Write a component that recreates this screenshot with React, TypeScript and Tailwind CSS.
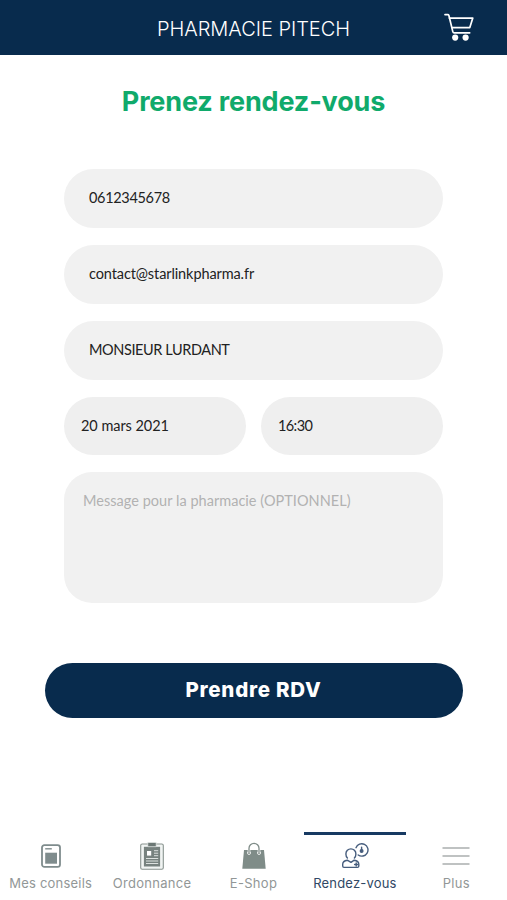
import type { ReactNode } from "react";

const fields = [
  { id: "phone", value: "0612345678", spacing: "tracking-[-0.33px]" },
  { id: "email", value: "contact@starlinkpharma.fr", spacing: "tracking-[-0.1px]" },
  { id: "name", value: "MONSIEUR LURDANT", spacing: "tracking-[-0.4px]" },
];

function CartIcon() {
  return (
    <svg viewBox="0 0 30 28" className="h-7 w-[30px]" fill="none" stroke="currentColor" strokeWidth="1.7" strokeLinecap="round" strokeLinejoin="round">
      <path d="M1 1.6h2.7c.6 0 1 .3 1.2.9l3.9 16.1c.2.8.6 1.2 1.3 1.2h15.6" />
      <path d="M5.4 5.1h23.4l-3 9.5H8" />
      <circle cx="11.2" cy="24.6" r="3.1" fill="currentColor" stroke="none" />
      <circle cx="21.6" cy="24.6" r="3.1" fill="currentColor" stroke="none" />
    </svg>
  );
}

function AdviceIcon() {
  return (
    <svg viewBox="0 0 20 24" className="h-6 w-5" fill="none">
      <rect x="1" y="1.2" width="18" height="21.6" rx="2.4" stroke="#7f8c8d" strokeWidth="1.8" />
      <path d="M4.2 4.8h6.6" stroke="#7f8c8d" strokeWidth="1.4" />
      <path d="M4.2 8.7h11.8v11H4.2z" fill="#7f8c8d" />
    </svg>
  );
}

function PrescriptionIcon() {
  return (
    <svg viewBox="0 0 24 28" className="h-7 w-6" fill="none">
      <rect x=".7" y="2" width="22.6" height="25.3" rx="1.5" fill="#f1f4f3" stroke="#89938f" strokeWidth="1.1" />
      <path d="M3.9 4.8h16.2v19.7H3.9z" fill="#77827f" />
      <path d="M7.8.5h8.4v4.2H7.8z" fill="#6c7875" stroke="#eef1f0" strokeWidth=".6" />
      <path d="M7 9h4.2v4.6H7z" fill="#fff" />
      <path d="M14 8.7h4.2M14 11.2h4.2M14 13.7h4.2M6 16.5h12.2M6 19h12.2M6 21.5h12.2" stroke="#dce1df" strokeWidth="1" />
    </svg>
  );
}

function ShopIcon() {
  return (
    <svg viewBox="0 0 24 28" className="h-7 w-6" fill="none">
      <path d="M2 8h20l1.7 18.8H.3z" fill="#7f8c88" />
      <circle cx="7" cy="11" r="1.5" fill="#7f8c88" stroke="#fff" strokeWidth=".8" />
      <circle cx="17" cy="11" r="1.5" fill="#7f8c88" stroke="#fff" strokeWidth=".8" />
      <path d="M7 11V6.3a5 5 0 0 1 10 0V11" stroke="#fff" strokeWidth="2.6" />
      <path d="M7 11V6.3a5 5 0 0 1 10 0V11" stroke="#7f8c88" strokeWidth="1.3" />
    </svg>
  );
}

function AppointmentIcon() {
  return (
    <svg viewBox="0 0 28 28" className="h-7 w-7" fill="none" stroke="#465d7d" strokeWidth="1.4" strokeLinecap="round" strokeLinejoin="round">
      <path d="M6.4 15.9c-1.1-1.1-1.5-2.5-1.5-4a5 5 0 0 1 10 0c0 1.5-.4 2.9-1.5 4" />
      <path d="M6.3 18.2c-3.1.5-4.6 1.6-4.6 4v1.9c0 .8.5 1.3 1.3 1.3h13.5c.8 0 1.3-.5 1.3-1.3v-1.9c0-2.4-1.5-3.5-4.6-4L10 20.4z" />
      <path d="M13.6 22.5h3.2M15.2 20.9v3.2" />
      <path d="M15 5.7a6.2 6.2 0 1 1 2.2 7.3" />
      <path d="M20.6 5.1v2.6" />
      <circle cx="20.6" cy="8.9" r="1.3" fill="#465d7d" />
    </svg>
  );
}

function MenuIcon() {
  return (
    <svg viewBox="0 0 28 20" className="h-5 w-7" stroke="#aaaeae" strokeWidth="1.5">
      <path d="M.5 2h27M.5 10h27M.5 18h27" />
    </svg>
  );
}

function Tab({ icon, label, spacing, active }: { icon: ReactNode; label: string; spacing: string; active?: boolean }) {
  return (
    <button
      type="button"
      aria-current={active ? "page" : undefined}
      className={`flex min-w-0 flex-1 flex-col items-center border-t-[3px] ${
        active ? "border-[#173a62] text-[#304865]" : "border-transparent text-[#929797]"
      }`}
    >
      <span className="mt-[7px] flex h-7 items-center">{icon}</span>
      <span className={`mt-[5px] text-[13px] leading-4 whitespace-nowrap ${spacing}`}>{label}</span>
    </button>
  );
}

export default function App() {
  return (
    <div className="flex h-[900px] w-[507px] flex-col bg-white font-['Inter',sans-serif]">
      <header className="grid h-[54.5px] shrink-0 grid-cols-[1fr_auto_1fr] items-center bg-[#082b4d] text-white">
        <span />
        <h1 className="pt-[4px] text-[20px] leading-6 font-light tracking-[-0.03px]">PHARMACIE PITECH</h1>
        <button type="button" aria-label="Panier" className="mr-[33px] justify-self-end">
          <CartIcon />
        </button>
      </header>

      <main className="flex flex-1 flex-col">
        <h2 className="mt-[31.5px] text-center text-[27px] leading-8 font-bold tracking-[-0.16px] text-[#10aa6b]">
          Prenez rendez-vous
        </h2>

        <div className="mx-auto mt-[51px] flex w-[379px] flex-col gap-[17px] font-['Lato',sans-serif] text-[14.5px] leading-5 text-[#222]">
          {fields.map((f) => (
            <div key={f.id} className={`flex h-[59px] items-center rounded-full bg-[#f1f1f1] pb-[2px] pl-[25px] ${f.spacing}`}>
              {f.value}
            </div>
          ))}
          <div className="grid h-[58px] grid-cols-2 gap-[15px]">
            <div className="flex items-center rounded-full bg-[#efefef] pb-px pl-[17px] tracking-[-0.05px]">20 mars 2021</div>
            <div className="flex items-center rounded-full bg-[#efefef] pb-px pl-[17px] tracking-[-0.6px]">16:30</div>
          </div>
          <div className="h-[131px] rounded-[28px] bg-[#f1f1f1] pt-[19px] pl-[19px] tracking-[0.03px] text-[#b2b2b2]">
            Message pour la pharmacie (OPTIONNEL)
          </div>
        </div>

        <button
          type="button"
          className="mx-auto mt-[59.5px] h-[55px] w-[418px] rounded-full bg-[#082b4d] pt-px text-[20.5px] font-extrabold tracking-[0.75px] text-white"
        >
          Prendre RDV
        </button>
      </main>

      <nav className="flex h-[68px] shrink-0">
        <Tab icon={<AdviceIcon />} label="Mes conseils" spacing="tracking-[0.22px]" />
        <Tab icon={<PrescriptionIcon />} label="Ordonnance" spacing="tracking-[0.3px]" />
        <Tab icon={<ShopIcon />} label="E-Shop" spacing="tracking-[0.3px]" />
        <Tab icon={<AppointmentIcon />} label="Rendez-vous" spacing="tracking-[0.2px]" active />
        <Tab icon={<MenuIcon />} label="Plus" spacing="tracking-[0.3px]" />
      </nav>
    </div>
  );
}
